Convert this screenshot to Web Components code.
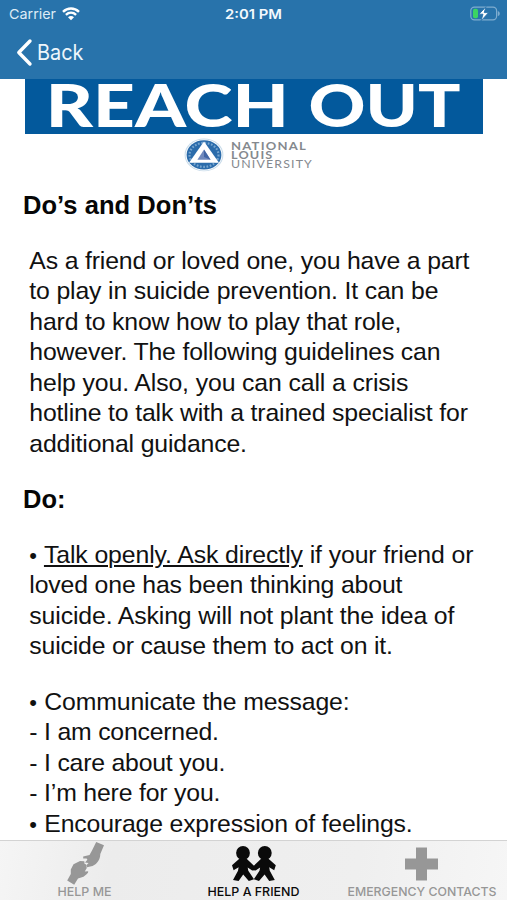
<!DOCTYPE html>
<html lang="en">
<head>
<meta charset="utf-8">
<title>Reach Out</title>
<style>
html,body{margin:0;background:#fff;}
body{width:507px;height:900px;overflow:hidden;font-family:"Liberation Sans",Arial,sans-serif;}
</style>
</head>
<body>
<reach-app></reach-app>
<script>
function define(name, html, setup) {
  customElements.define(name, class extends HTMLElement {
    constructor() {
      super();
      this.attachShadow({mode: 'open'}).innerHTML = html;
      if (setup) setup(this);
    }
  });
}

define('status-bar', `
<style>
:host{display:grid;grid-template-columns:1fr auto 1fr;align-items:center;height:26px;padding:1px 7px 0 9px;box-sizing:border-box}
.left{display:flex;align-items:center;gap:6px}
svg{display:block;overflow:visible}
.right{justify-self:end}
svg text{font-family:Inter,sans-serif}
</style>
<div class="left"><svg width="47" height="16"><text x="0" y="12.5" font-size="13.5" fill="#dcebf6" textLength="47" lengthAdjust="spacingAndGlyphs">Carrier</text></svg>
<svg width="18" height="14" viewBox="0 0 18 14" fill="none" stroke="#fff" stroke-width="2.4"><path d="M1 4.8C5.6.3 12.4.3 17 4.8M3.9 7.8c3-2.8 7.2-2.8 10.2 0"/><path d="M6 10.2c1.7-1.5 4.3-1.5 6 0L9 13.2z" fill="#fff" stroke="none"/></svg></div>
<svg width="57" height="16"><text x="-1" y="12.7" font-size="13" font-weight="600" fill="#f3f9fd" textLength="57" lengthAdjust="spacingAndGlyphs">2:01 PM</text></svg>
<svg class="right" width="31" height="14" viewBox="0 0 31 14"><rect x="1.8" y=".2" width="25.8" height="12.6" rx="3.6" fill="none" stroke="#7fadd0" stroke-width="1.2"/><rect x="4" y="1.8" width="5" height="9.4" rx="1.8" fill="#3bd463"/><path d="M28.8 3.9c2.6.8 2.6 4.4 0 5.2z" fill="#7fadd0"/><path d="M17 -.3 10 7.2h4L12 13.9l7.6-8.3h-4.4z" fill="#fff" stroke="#2873ab" stroke-width=".9"/></svg>`);

define('nav-bar', `
<style>
:host{display:flex;align-items:center;gap:6px;height:53px;padding:0 16px;box-sizing:border-box}
svg{display:block;overflow:visible}
</style>
<svg width="16" height="27" viewBox="0 0 16 27"><path d="M14 2 2.8 13.5 14 25" fill="none" stroke="#fff" stroke-width="3.4" stroke-linecap="round" stroke-linejoin="round"/></svg>
<svg width="46" height="27"><text x="-1" y="20.8" font-family="Inter,sans-serif" font-size="21.5" fill="#eef6fb" textLength="46.5" lengthAdjust="spacingAndGlyphs">Back</text></svg>`);

define('reach-banner', `
<style>
:host{display:block;height:54.5px;margin:0 24.5px 0 25px;background:#03599c}
svg{display:block;overflow:visible}
</style>
<svg width="458" height="54.5" font-family="Lato,sans-serif" font-weight="900" font-size="59" fill="#fff"><text x="20.8" y="48.2" textLength="243" lengthAdjust="spacingAndGlyphs">REACH</text><text x="283.5" y="48.2" textLength="152" lengthAdjust="spacingAndGlyphs">OUT</text></svg>`);

define('university-logo', `
<style>
:host{display:flex;justify-content:center;height:41px;margin-top:1px}
svg{display:block;overflow:visible}
</style>
<svg width="507" height="41" viewBox="0 134.5 507 41">
<ellipse cx="204" cy="154.4" rx="19.4" ry="16.4" fill="#c9dcea"/>
<ellipse cx="204" cy="154.4" rx="18.4" ry="15.5" fill="#fff"/>
<ellipse cx="204" cy="154.4" rx="17.4" ry="14.7" fill="#2b6cab"/>
<ellipse cx="204" cy="154.4" rx="14.5" ry="12" fill="none" stroke="#79a6cf" stroke-width="2.2" stroke-dasharray="1.7 1.6"/>
<path d="M204 141 219 162.2H189z" fill="#fff"/><path d="M204 149 210.6 159.2H197.4z" fill="#7089bd"/><path d="M204 149 210.6 159.2 204 156.5z" fill="#4265a4"/>
<g font-family="Lato,sans-serif" fill="#85898e" font-size="10.6" letter-spacing="1">
<text x="231" y="149.2" font-weight="700" textLength="76" lengthAdjust="spacingAndGlyphs">NATIONAL</text>
<text x="231" y="158.1" font-weight="700" textLength="42.5" lengthAdjust="spacingAndGlyphs">LOUIS</text>
<text x="231" y="167" textLength="82" lengthAdjust="spacingAndGlyphs">UNIVERSITY</text></g>
</svg>`);

define('section-title', `
<style>
:host{display:block;height:30.5px;margin-left:23px;font:bold 25.5px/30.5px "Liberation Sans",Arial,sans-serif;color:#060606;white-space:nowrap;letter-spacing:.06px}
</style><slot></slot>`);

define('guide-text', `
<style>
:host{display:block;margin:25px 0 25px 29.3px;font:24.8px/30.5px "Liberation Sans",Arial,sans-serif;color:#111}
</style><slot></slot>`);

/* One line of copy, tracked so that its advance equals the width attribute. */
customElements.define('guide-line', class extends HTMLElement {
  constructor() {
    super();
    this.attachShadow({mode: 'open'}).innerHTML = `
<style>:host{display:block;height:30.5px}span{display:inline-block;white-space:pre}</style><span><slot></slot></span>`;
  }
  connectedCallback() {
    const span = this.shadowRoot.querySelector('span');
    const gap = (+this.getAttribute('w') - span.getBoundingClientRect().width) / this.textContent.length;
    span.style.letterSpacing = gap.toFixed(3) + 'px';
  }
});

define('tab-item', `
<style>
:host{display:flex;flex-direction:column;align-items:center;width:169px;color:#979797;padding-top:1px;box-sizing:border-box}
:host([active]){color:#0a0a0a}
::slotted(svg){display:block;height:41px;overflow:visible}
svg{display:block;overflow:visible}
text{font-family:Inter,sans-serif;font-size:12px;font-weight:500}
</style>
<slot></slot><svg class="l" height="17"><text y="12.6" x="-.5" fill="currentColor" lengthAdjust="spacingAndGlyphs"></text></svg>`, el => {
  const svg = el.shadowRoot.querySelector('.l'), t = svg.firstChild, w = el.getAttribute('w');
  svg.setAttribute('width', w);
  t.setAttribute('textLength', w);
  t.textContent = el.getAttribute('label');
});

define('tab-bar', `
<style>
:host{display:flex;justify-content:space-between;height:60.5px;background:linear-gradient(100deg,#f5f5f5,#ececec 22%,#efefef 70%,#f6f6f6);border-top:1px solid #d3d3d3;box-sizing:border-box}
</style><slot></slot>`);

define('reach-app', `
<style>
:host{display:flex;flex-direction:column;width:507px;height:900px;background:#fff;overflow:hidden}
header{flex:none;height:79px;background:#2873ab}
main{flex:none;height:760.5px}
section-title.first{margin-top:14.9px}
u{text-decoration-thickness:1.5px;text-underline-offset:2px}
.dot{display:inline-block;width:8.3px;font-size:22px;line-height:1}
</style>
<header><status-bar></status-bar><nav-bar></nav-bar></header>
<main>
<reach-banner></reach-banner>
<university-logo></university-logo>
<section-title class="first">Do’s and Don’ts</section-title>
<guide-text>
<guide-line w="440">As a friend or loved one, you have a part</guide-line>
<guide-line w="409">to play in suicide prevention. It can be</guide-line>
<guide-line w="372">hard to know how to play that role,</guide-line>
<guide-line w="411">however. The following guidelines can</guide-line>
<guide-line w="379">help you. Also, you can call a crisis</guide-line>
<guide-line w="438.5">hotline to talk with a trained specialist for</guide-line>
<guide-line w="217.5">additional guidance.</guide-line>
</guide-text>
<section-title>Do:</section-title>
<guide-text>
<guide-line w="444"><span class="dot">•</span> <u>Talk openly. Ask directly</u> if your friend or</guide-line>
<guide-line w="373">loved one has been thinking about</guide-line>
<guide-line w="425">suicide. Asking will not plant the idea of</guide-line>
<guide-line w="363.5">suicide or cause them to act on it.</guide-line>
</guide-text>
<guide-text>
<guide-line w="320"><span class="dot">•</span> Communicate the message:</guide-line>
<guide-line w="189.5">- I am concerned.</guide-line>
<guide-line w="196">- I care about you.</guide-line>
<guide-line w="191">- I’m here for you.</guide-line>
<guide-line w="383"><span class="dot">•</span> Encourage expression of feelings.</guide-line>
</guide-text>
</main>
<tab-bar>
<tab-item label="HELP ME" w="54"><svg width="42" height="41" viewBox="0 0 42 41" fill="currentColor"><path d="M32.2 0 40 3.3 36.3 12C36.3 17 33.5 21.8 28.5 24L23 25.2 22.3 23.2 24.6 21 21 20.6 23.4 17.8 22.6 16.4 19.2 16.4 19.2 14.5 25.5 13 28 8.6z"/><path d="M3.2 38.6 10.2 42.8 14 36.6 19.5 34.8 22.3 32.4 24 30.8 24.2 29.2 20.8 29.6 22.8 26 22 22.2 20.6 22 20.3 19.3 16 19 9.5 22.3 6.8 27.5 6.8 32z"/></svg></tab-item>
<tab-item active label="HELP A FRIEND" w="92"><svg width="48" height="41" viewBox="0 0 48 41" fill="currentColor"><g><circle cx="13" cy="11" r="6.9"/><path d="M9.6 16.5h6.8L24.2 24v4.2L22.2 28.6 17.7 25.4 18.3 28.8 24 37.2 18.8 39 13.2 32.6 8.6 39 3 38 8 28.8 8.6 25.2 3.6 28.2 2 23.2z"/></g><g transform="matrix(-1 0 0 1 47.8 0)"><circle cx="13" cy="11" r="6.9"/><path d="M9.6 16.5h6.8L24.2 24v4.2L22.2 28.6 17.7 25.4 18.3 28.8 24 37.2 18.8 39 13.2 32.6 8.6 39 3 38 8 28.8 8.6 25.2 3.6 28.2 2 23.2z"/></g></svg></tab-item>
<tab-item label="EMERGENCY CONTACTS" w="149"><svg width="34" height="41" viewBox="0 0 34 41" fill="currentColor"><path d="M10 5.500h11v11h11V27.500H21v11H10v-11H-1V16.500h11z"/></svg></tab-item>
</tab-bar>`);
</script>
</body>
</html>
